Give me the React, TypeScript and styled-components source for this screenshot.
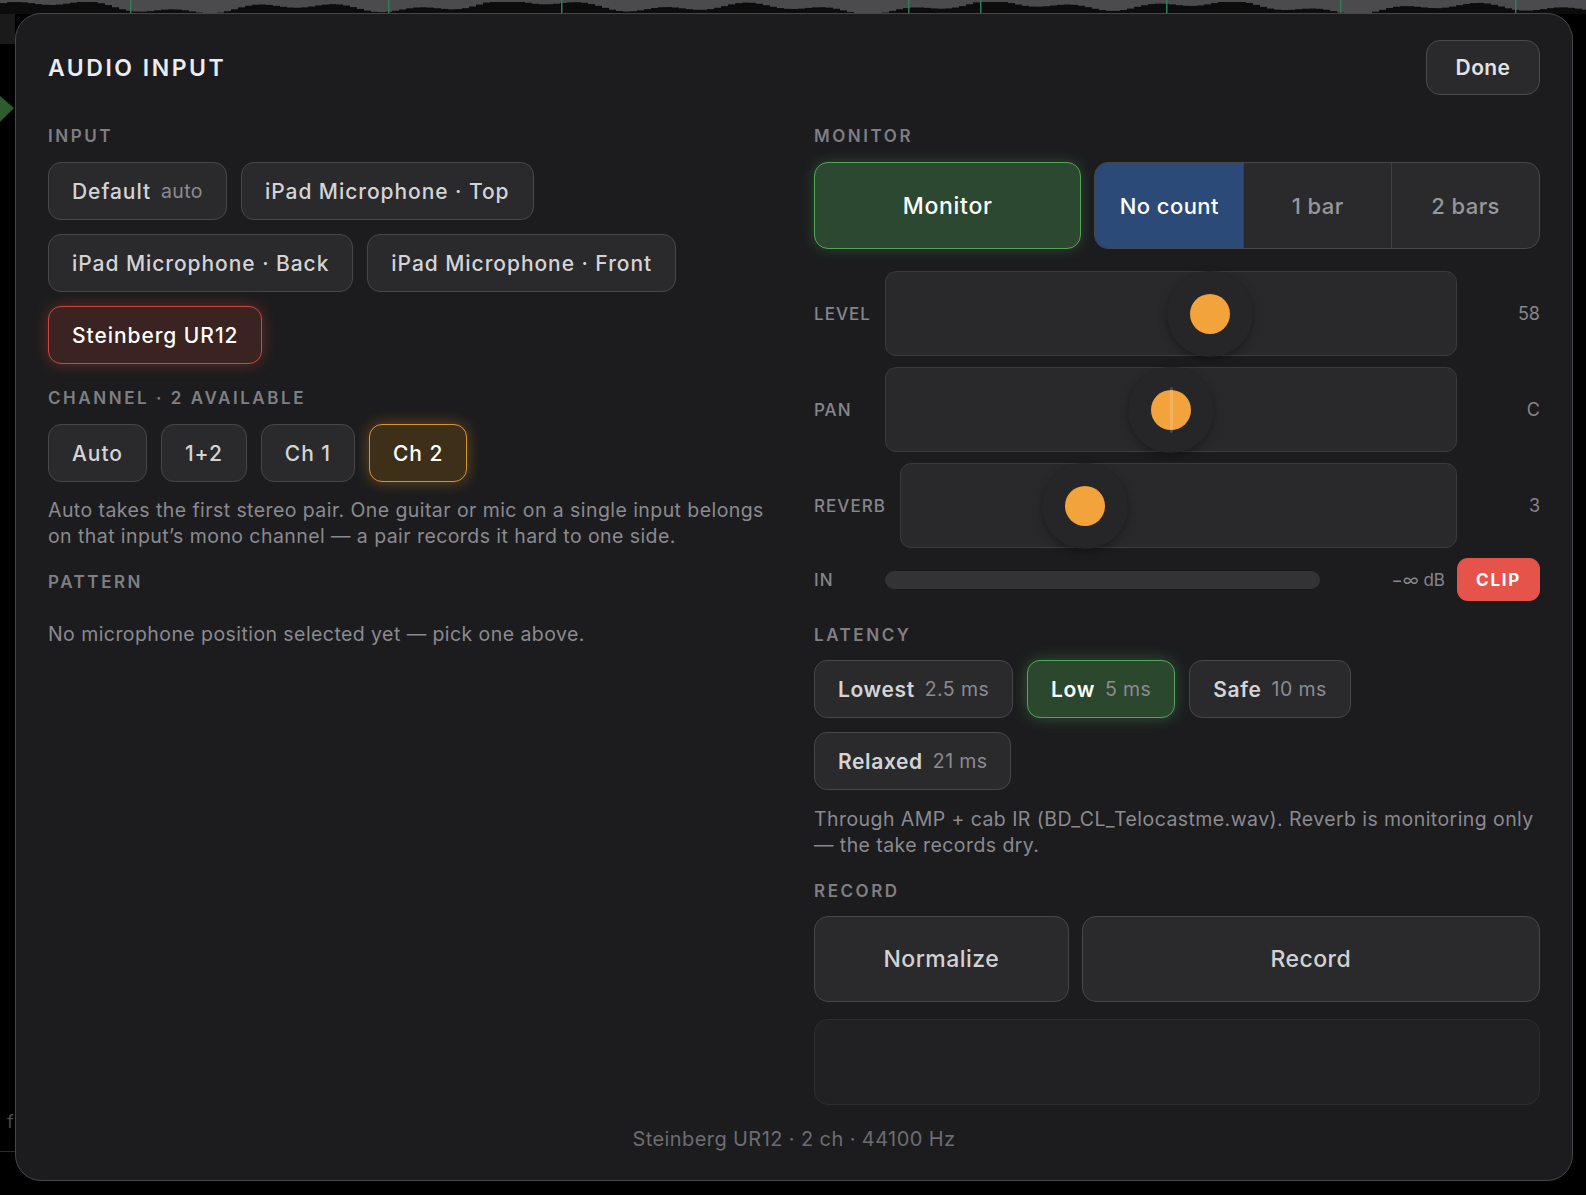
import styled, { createGlobalStyle, css } from "styled-components";

const GlobalStyle = createGlobalStyle`
  html, body {
    margin: 0;
    padding: 0;
    background: #000;
  }
  body {
    font-family: Inter, "Noto Sans", sans-serif;
    -webkit-font-smoothing: antialiased;
  }
  * {
    box-sizing: border-box;
  }
`;

type Tone = "default" | "red" | "amber" | "green";

const tones = {
  default: css`
    background: #2a2a2c;
    border-color: #47474a;
    color: #d4d4d6;
  `,
  red: css`
    background: #3b2321;
    border-color: #c94a40;
    color: #fff;
    box-shadow: 0 0 15px rgba(214, 72, 60, 0.38);
  `,
  amber: css`
    background: #3d2f18;
    border-color: #d8952f;
    color: #fff;
    box-shadow: 0 0 15px rgba(228, 150, 40, 0.38);
  `,
  green: css`
    background: #2b472d;
    border-color: #51a757;
    color: #fff;
    box-shadow: 0 0 15px rgba(80, 176, 90, 0.38);
  `,
};

const Backdrop = styled.div`
  position: relative;
  width: 1586px;
  height: 1195px;
  overflow: hidden;
  padding: 13px 13px 0 15px;
`;

const Scenery = styled.svg`
  position: absolute;
  left: 0;
  top: 0;
`;

const Dialog = styled.div`
  position: relative;
  z-index: 1;
  width: 1558px;
  height: 1168px;
  background: #1c1c1e;
  border: 1.5px solid #47474a;
  border-radius: 26px;
  padding: 26px 32px 0 32px;
  display: flex;
  flex-direction: column;
`;

const Header = styled.div`
  display: flex;
  justify-content: space-between;
  align-items: center;
  height: 55px;
`;

const Title = styled.h1`
  margin: 0;
  font-size: 23px;
  font-weight: 600;
  letter-spacing: 0.11em;
  color: #ececee;
`;

const DoneButton = styled.button`
  height: 55px;
  width: 114px;
  border-radius: 14px;
  border: 1.5px solid #4a4a4d;
  background: #2a2a2c;
  color: #e2e2e4;
  font-family: inherit;
  font-size: 21px;
  font-weight: 600;
  letter-spacing: 0.02em;
`;

const Columns = styled.div`
  display: grid;
  grid-template-columns: 1fr 1fr;
  column-gap: 40px;
  margin-top: 31px;
`;

const Column = styled.div`
  display: flex;
  flex-direction: column;
  min-width: 0;
`;

const Label = styled.div<{ $mt?: number }>`
  margin-top: ${(p) => p.$mt ?? 0}px;
  height: 20px;
  line-height: 20px;
  font-size: 17px;
  font-weight: 600;
  letter-spacing: 0.15em;
  color: #7f7f84;
  text-transform: uppercase;
`;

const ChipWrap = styled.div<{ $mt?: number }>`
  display: flex;
  flex-wrap: wrap;
  gap: 14px 14px;
  margin-top: ${(p) => p.$mt ?? 16}px;
`;

const Chip = styled.button<{ $tone?: Tone }>`
  height: 58px;
  padding: 0 23px;
  border-radius: 13px;
  border: 1.5px solid;
  font-family: inherit;
  font-size: 21px;
  font-weight: 500;
  letter-spacing: 0.045em;
  display: inline-flex;
  align-items: center;
  white-space: nowrap;
  ${(p) => tones[p.$tone ?? "default"]}
`;

const Strong = styled.span`
  font-weight: 600;
  letter-spacing: 0.03em;
`;

const Sub = styled.span`
  margin-left: 10px;
  font-size: 19.5px;
  font-weight: 400;
  letter-spacing: 0.02em;
  color: #8b8b90;
`;

const Note = styled.p<{ $mt?: number }>`
  margin: ${(p) => p.$mt ?? 0}px 0 0;
  font-size: 19.5px;
  line-height: 26px;
  color: #8a8a8f;
  letter-spacing: 0.022em;
`;

const MonitorRow = styled.div`
  display: grid;
  grid-template-columns: 3fr 5fr;
  gap: 13px;
  height: 87px;
  margin-top: 16px;
`;

const MonitorButton = styled.button`
  border-radius: 14px;
  border: 1.5px solid #52a659;
  background: #2d4830;
  box-shadow: 0 0 14px rgba(80, 176, 90, 0.3);
  color: #fff;
  font-family: inherit;
  font-size: 23px;
  font-weight: 500;
  letter-spacing: 0.03em;
`;

const Segmented = styled.div`
  display: grid;
  grid-template-columns: repeat(3, 1fr);
  border-radius: 14px;
  border: 1.5px solid #47474a;
  background: #2a2a2c;
  overflow: hidden;
`;

const Segment = styled.div<{ $active?: boolean }>`
  display: flex;
  align-items: center;
  justify-content: center;
  font-size: 22px;
  font-weight: 500;
  letter-spacing: 0.02em;
  color: ${(p) => (p.$active ? "#fff" : "#97979c")};
  background: ${(p) => (p.$active ? "#2c4a78" : "transparent")};
  & + & {
    border-left: 1.5px solid #3e3e41;
  }
`;

const Sliders = styled.div`
  display: flex;
  flex-direction: column;
  gap: 11px;
  margin-top: 22px;
`;

const SliderRow = styled.div<{ $mt?: number }>`
  display: flex;
  align-items: center;
  margin-top: ${(p) => p.$mt ?? 0}px;
`;

const RowLabel = styled.div`
  min-width: 57px;
  margin-right: 14px;
  font-size: 17px;
  font-weight: 500;
  letter-spacing: 0.06em;
  color: #86868b;
`;

const Track = styled.div`
  position: relative;
  flex: 1;
  height: 85px;
  border-radius: 11px;
  border: 1.5px solid #3a3a3d;
  background: #29292b;
`;

const Halo = styled.div`
  position: absolute;
  top: -1.5px;
  width: 86px;
  height: 86px;
  border-radius: 50%;
  background: #262628;
  box-shadow: 0 3px 8px rgba(0, 0, 0, 0.35);
  display: flex;
  align-items: center;
  justify-content: center;
`;

const Dot = styled.div`
  width: 40px;
  height: 40px;
  border-radius: 50%;
  background: #f2a33b;
`;

const CenterTick = styled.div`
  position: absolute;
  left: 50%;
  top: 19px;
  width: 3px;
  height: 46px;
  margin-left: -1.5px;
  border-radius: 2px;
  background: rgba(255, 255, 255, 0.17);
  z-index: 2;
`;

const Value = styled.div`
  width: 70px;
  margin-left: 13px;
  text-align: right;
  font-size: 18px;
  color: #86868b;
`;

const Meter = styled.div`
  flex: 1;
  height: 18px;
  border-radius: 9px;
  background: #333336;
`;

const Readout = styled.div`
  width: 113px;
  margin: 0 12px;
  text-align: right;
  font-size: 17px;
  color: #86868b;
`;

const ClipBadge = styled.div`
  width: 83px;
  height: 43px;
  border-radius: 11px;
  background: #e5534b;
  color: #fff;
  font-size: 17px;
  font-weight: 700;
  letter-spacing: 0.1em;
  display: flex;
  align-items: center;
  justify-content: center;
`;

const RecordRow = styled.div`
  display: grid;
  grid-template-columns: 5fr 9fr;
  gap: 13px;
  height: 86px;
  margin-top: 15px;
`;

const BigButton = styled.button`
  border-radius: 14px;
  border: 1.5px solid #47474a;
  background: #2a2a2c;
  color: #d2d2d4;
  font-family: inherit;
  font-size: 23px;
  font-weight: 500;
  letter-spacing: 0.02em;
`;

const TakeBox = styled.div`
  height: 86px;
  margin-top: 17px;
  border-radius: 14px;
  border: 1.5px solid #2d2d30;
  background: #212123;
`;

const Footer = styled.div`
  margin-top: 22px;
  text-align: center;
  font-size: 20px;
  line-height: 24px;
  letter-spacing: 0.02em;
  color: #6c6c71;
`;

const sliders = [
  { label: "LEVEL", pos: 0.58, value: "58", center: false },
  { label: "PAN", pos: 0.5, value: "C", center: true },
  { label: "REVERB", pos: 0.3, value: "3", center: false },
];

const latencies = [
  { name: "Lowest", ms: "2.5 ms", tone: "default" as Tone },
  { name: "Low", ms: "5 ms", tone: "green" as Tone },
  { name: "Safe", ms: "10 ms", tone: "default" as Tone },
  { name: "Relaxed", ms: "21 ms", tone: "default" as Tone },
];

function Waveform() {
  const blocks: { x: number; h: number }[] = [];
  for (let x = 0; x < 1586; x += 7) {
    const h =
      7 +
      3.5 * Math.sin(x / 37) +
      2.5 * Math.sin(x / 13 + 1) +
      2 * Math.sin(x / 91 + 2);
    blocks.push({ x, h: Math.max(0, Math.min(12, h)) });
  }
  const cuts = [130, 388, 561, 908, 980, 1166, 1340, 1515];
  return (
    <Scenery width={1586} height={1195}>
      <rect x={0} y={0} width={1586} height={14} fill="#4b4b4d" />
      {blocks.map((b) => (
        <rect key={b.x} x={b.x} y={14 - b.h} width={7} height={b.h} fill="#0c0c0c" />
      ))}
      {cuts.map((c) => (
        <rect key={c} x={c} y={0} width={1.5} height={14} fill="#2f7d5a" />
      ))}
      <rect x={0} y={14} width={15} height={30} fill="#1a1a1a" />
      <polygon points="0,96 14,108 0,122" fill="#2d5c2f" />
      <text x={7} y={1128} fill="#4a4a4c" fontSize={18} fontFamily="Inter, sans-serif">
        f
      </text>
      <rect x={0} y={1151} width={15} height={1} fill="#2a2a2c" />
    </Scenery>
  );
}

export default function App() {
  return (
    <>
      <GlobalStyle />
      <Backdrop>
        <Waveform />
        <Dialog>
          <Header>
            <Title>AUDIO INPUT</Title>
            <DoneButton>Done</DoneButton>
          </Header>
          <Columns>
            <Column>
              <Label>Input</Label>
              <ChipWrap>
                <Chip>
                  Default<Sub>auto</Sub>
                </Chip>
                <Chip>iPad Microphone · Top</Chip>
                <Chip>iPad Microphone · Back</Chip>
                <Chip>iPad Microphone · Front</Chip>
                <Chip $tone="red">Steinberg UR12</Chip>
              </ChipWrap>
              <Label $mt={24}>Channel · 2 available</Label>
              <ChipWrap>
                <Chip>Auto</Chip>
                <Chip>1+2</Chip>
                <Chip>Ch 1</Chip>
                <Chip $tone="amber">Ch 2</Chip>
              </ChipWrap>
              <Note $mt={15}>
                Auto takes the first stereo pair. One guitar or mic on a single input belongs on
                that input’s mono channel — a pair records it hard to one side.
              </Note>
              <Label $mt={23}>Pattern</Label>
              <Note $mt={29}>No microphone position selected yet — pick one above.</Note>
            </Column>
            <Column>
              <Label>Monitor</Label>
              <MonitorRow>
                <MonitorButton>Monitor</MonitorButton>
                <Segmented>
                  <Segment $active>No count</Segment>
                  <Segment>1 bar</Segment>
                  <Segment>2 bars</Segment>
                </Segmented>
              </MonitorRow>
              <Sliders>
                {sliders.map((s) => (
                  <SliderRow key={s.label}>
                    <RowLabel>{s.label}</RowLabel>
                    <Track>
                      {s.center && <CenterTick />}
                      <Halo style={{ left: `calc((100% - 86px) * ${s.pos})` }}>
                        <Dot />
                      </Halo>
                    </Track>
                    <Value>{s.value}</Value>
                  </SliderRow>
                ))}
              </Sliders>
              <SliderRow $mt={10}>
                <RowLabel>IN</RowLabel>
                <Meter />
                <Readout>−∞ dB</Readout>
                <ClipBadge>CLIP</ClipBadge>
              </SliderRow>
              <Label $mt={24}>Latency</Label>
              <ChipWrap $mt={15}>
                {latencies.map((l) => (
                  <Chip key={l.name} $tone={l.tone}>
                    <Strong>{l.name}</Strong>
                    <Sub>{l.ms}</Sub>
                  </Chip>
                ))}
              </ChipWrap>
              <Note $mt={16}>
                Through AMP + cab IR (BD_CL_Telocastme.wav). Reverb is monitoring only — the take
                records dry.
              </Note>
              <Label $mt={23}>Record</Label>
              <RecordRow>
                <BigButton>Normalize</BigButton>
                <BigButton>Record</BigButton>
              </RecordRow>
              <TakeBox />
            </Column>
          </Columns>
          <Footer>Steinberg UR12 · 2 ch · 44100 Hz</Footer>
        </Dialog>
      </Backdrop>
    </>
  );
}
